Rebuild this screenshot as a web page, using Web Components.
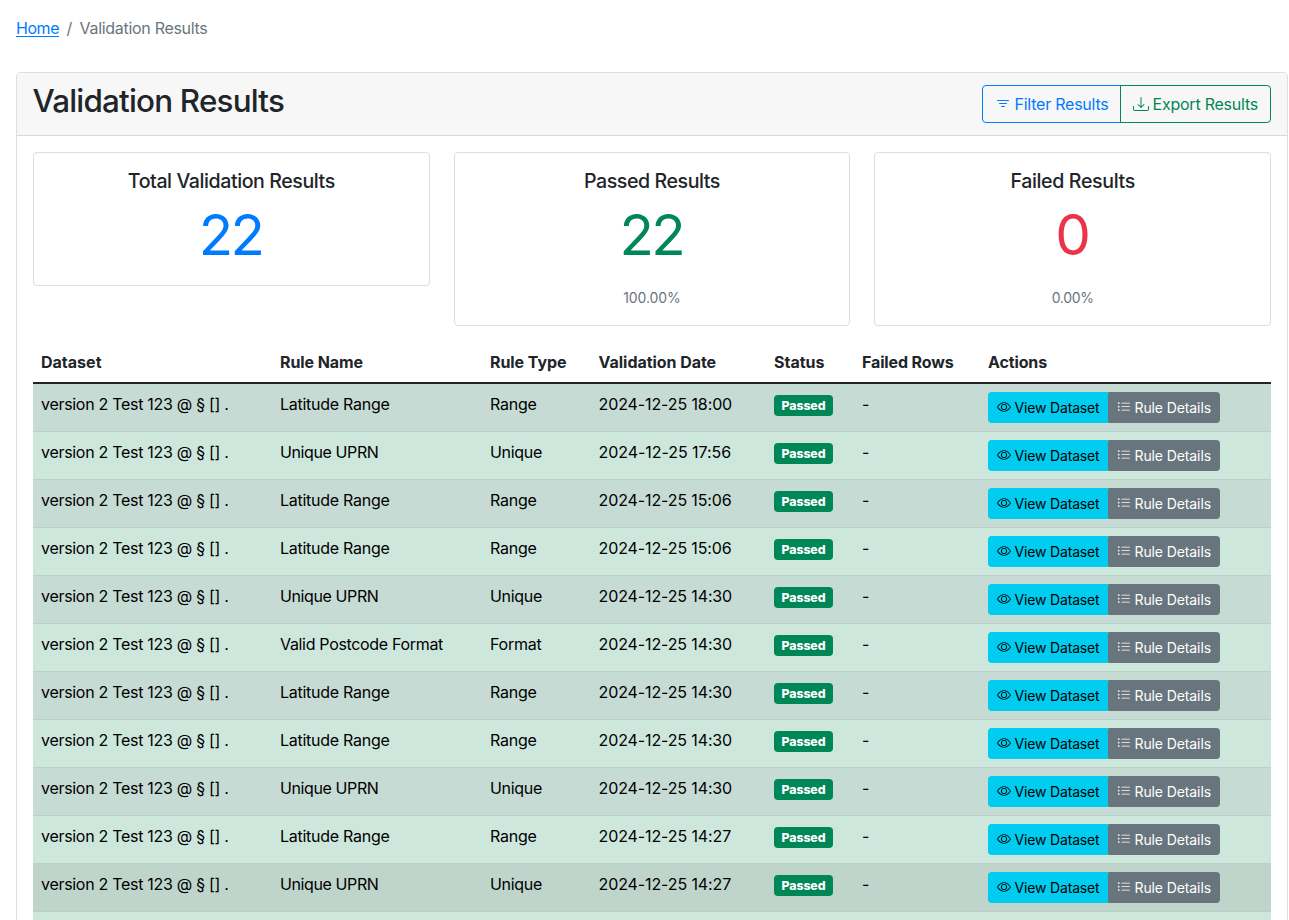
<!DOCTYPE html>
<html lang="en">
<head>
<meta charset="utf-8">
<title>Validation Results</title>
<style>
  html, body { margin: 0; background: #fff; overflow: hidden; }
  body { font-family: Inter, "Liberation Sans", sans-serif; font-size: 16px; line-height: 24px; color: #212529; }
</style>
</head>
<body>
<validation-page></validation-page>
<script>
const ICONS = {
  filter: '<path d="M6 10.5a.5.5 0 0 1 .5-.5h3a.5.5 0 0 1 0 1h-3a.5.5 0 0 1-.5-.5zm-2-3a.5.5 0 0 1 .5-.5h7a.5.5 0 0 1 0 1h-7a.5.5 0 0 1-.5-.5zm-2-3a.5.5 0 0 1 .5-.5h11a.5.5 0 0 1 0 1h-11a.5.5 0 0 1-.5-.5z"/>',
  download: '<path d="M.5 9.9a.5.5 0 0 1 .5.5v2.5a1 1 0 0 0 1 1h12a1 1 0 0 0 1-1v-2.5a.5.5 0 0 1 1 0v2.5a2 2 0 0 1-2 2H2a2 2 0 0 1-2-2v-2.5a.5.5 0 0 1 .5-.5z"/><path d="M7.646 11.854a.5.5 0 0 0 .708 0l3-3a.5.5 0 0 0-.708-.708L8.5 10.293V1.5a.5.5 0 0 0-1 0v8.793L5.354 8.146a.5.5 0 1 0-.708.708l3 3z"/>',
  eye: '<path d="M16 8s-3-5.5-8-5.5S0 8 0 8s3 5.5 8 5.5S16 8 16 8zM1.173 8a13.133 13.133 0 0 1 1.66-2.043C4.12 4.668 5.88 3.5 8 3.5c2.12 0 3.879 1.168 5.168 2.457A13.133 13.133 0 0 1 14.828 8c-.058.087-.122.183-.195.288-.335.48-.83 1.12-1.465 1.755C11.879 11.332 10.119 12.5 8 12.5c-2.12 0-3.879-1.168-5.168-2.457A13.134 13.134 0 0 1 1.172 8z"/><path d="M8 5.5a2.5 2.5 0 1 0 0 5 2.5 2.5 0 0 0 0-5zM4.5 8a3.5 3.5 0 1 1 7 0 3.5 3.5 0 0 1-7 0z"/>',
  list: '<path fill-rule="evenodd" d="M5 11.5a.5.5 0 0 1 .5-.5h9a.5.5 0 0 1 0 1h-9a.5.5 0 0 1-.5-.5zm0-4a.5.5 0 0 1 .5-.5h9a.5.5 0 0 1 0 1h-9a.5.5 0 0 1-.5-.5zm0-4a.5.5 0 0 1 .5-.5h9a.5.5 0 0 1 0 1h-9a.5.5 0 0 1-.5-.5zm-3 1a1 1 0 1 0 0-2 1 1 0 0 0 0 2zm0 4a1 1 0 1 0 0-2 1 1 0 0 0 0 2zm0 4a1 1 0 1 0 0-2 1 1 0 0 0 0 2z"/>'
};

class Base extends HTMLElement {
  connectedCallback() {
    if (this.shadowRoot) return;
    this.attachShadow({ mode: 'open' }).innerHTML = this.view();
    this.ready();
  }
  ready() {}
}

/* A single line of text tracked so that it sets to the measure given in "w". */
customElements.define('ui-text', class extends Base {
  view() { return '<style>:host{display:inline-block;white-space:nowrap}</style><slot></slot>'; }
  ready() {
    const w = parseFloat(this.getAttribute('w'));
    if (!w) return;
    const n = this.textContent.length;
    const natural = this.getBoundingClientRect().width;
    this.style.letterSpacing = ((w - natural) / n).toFixed(4) + 'px';
  }
});

customElements.define('ui-icon', class extends Base {
  view() {
    return `<style>:host{display:block;width:var(--icon,16px);height:var(--icon,16px);flex:none}svg{display:block;width:100%;height:100%}</style>
      <svg viewBox="0 0 16 16" fill="currentColor">${ICONS[this.getAttribute('name')]}</svg>`;
  }
});

customElements.define('ui-button', class extends Base {
  view() {
    return `<style>
      :host{display:flex;box-sizing:border-box;height:38px;padding:0 12px;border:1px solid currentColor;align-items:center;white-space:nowrap;cursor:pointer}
      :host([variant=primary]){color:#007bff;border-radius:4px 0 0 4px;width:139px}
      :host([variant=success]){color:#008758;border-radius:0 4px 4px 0;margin-left:-1px;width:151px}
      :host([size=sm]){height:31px;padding:0 8px;font-size:14px;line-height:21px;--icon:14px}
      :host([variant=info]){background:#00ccf0;border-color:#00ccf0;color:#000;border-radius:3.2px 0 0 3.2px;width:120px}
      :host([variant=secondary]){background:#69757d;border-color:#69757d;width:112px;border-radius:0 3.2px 3.2px 0}
      .in{display:contents}
      :host([variant=secondary]) ui-icon,:host([variant=secondary]) slot{color:#fff}
      ui-icon{margin:0 3.5px 0 0}
      :host([size=sm]) ui-icon{margin-top:-1px}
    </style><ui-icon name="${this.getAttribute('icon')}"></ui-icon><span class="in"><slot></slot></span>`;
  }
});

customElements.define('bread-crumb', class extends Base {
  view() {
    return `<style>:host{display:flex;height:24px;color:#6a757d}a,a ui-text{color:#007bff;text-decoration:underline;text-underline-offset:1.5px;text-decoration-thickness:1px}.sep{width:5px;padding:0 8px 0 7.5px}</style>
      <a><ui-text w="43">Home</ui-text></a><span class="sep">/</span><ui-text w="128">Validation Results</ui-text>`;
  }
});

customElements.define('stat-card', class extends Base {
  view() {
    return `<style>
      :host{display:block;box-sizing:border-box;border:1px solid #dedede;border-radius:4px;padding:16px;text-align:center;background:#fff}
      .t{font-size:19.6px;font-weight:500;line-height:24px;margin-bottom:8px}
      .n{font-size:56.5px;font-weight:380;line-height:68px;padding-right:1.5px}
      .p{margin-top:16px;height:24px;line-height:26px;font-size:14px;color:#6a757d}
    </style>
    <div class="t"><slot></slot></div>
    <div class="n" style="color:${this.getAttribute('color')}"><ui-text w="${this.getAttribute('nw')}">${this.getAttribute('value')}</ui-text></div>
    ${this.hasAttribute('percent') ? `<div class="p"><ui-text w="${this.getAttribute('pw')}">${this.getAttribute('percent')}</ui-text></div>` : ''}`;
  }
});

customElements.define('status-badge', class extends Base {
  view() {
    return `<style>:host{display:flex;box-sizing:border-box;width:59px;height:21px;margin-top:3px;border-radius:4px;background:#008758;color:#fff;font-size:12.3px;font-weight:800;line-height:21px;align-items:center;justify-content:center}</style><ui-text w="44">Passed</ui-text>`;
  }
});

const COLS = 'grid-template-columns:239px 210px 108.6px 175.4px 88px 126px 1fr';

customElements.define('result-row', class extends Base {
  view() {
    const cell = k => { const [t, w] = this.getAttribute(k).split('|'); return `<div><ui-text w="${w}">${t}</ui-text></div>`; };
    return `<style>
      :host{display:grid;${COLS};box-sizing:border-box;height:48px;padding-top:8px;border-bottom:1px solid #bad0c7;background:#cee7dd;color:#000}
      :host([striped]){background:#c6dbd3}
      :host([active]){background:#bfd5cc}
      div{padding-left:8px}
      .a{display:flex}
    </style>
    <div><ui-text w="187.5">version 2 Test 123 @ § [] .</ui-text></div>
    ${cell('rule')}${cell('type')}${cell('date')}
    <div><status-badge></status-badge></div><div>-</div>
    <div class="a"><ui-button size="sm" variant="info" icon="eye"><ui-text w="85">View Dataset</ui-text></ui-button><ui-button size="sm" variant="secondary" icon="list"><ui-text w="76.5">Rule Details</ui-text></ui-button></div>`;
  }
});

const LAT = 'Latitude Range|109.5', UPRN = 'Unique UPRN|98.5', POST = 'Valid Postcode Format|163';
const RANGE = 'Range|46.5', UNIQUE = 'Unique|52', FORMAT = 'Format|51.5';
const ROWS = [
  [LAT, RANGE, '2024-12-25 18:00|133.5'],
  [UPRN, UNIQUE, '2024-12-25 17:56|132.5'],
  [LAT, RANGE, '2024-12-25 15:06|133'],
  [LAT, RANGE, '2024-12-25 15:06|133'],
  [UPRN, UNIQUE, '2024-12-25 14:30|133.5'],
  [POST, FORMAT, '2024-12-25 14:30|133.5'],
  [LAT, RANGE, '2024-12-25 14:30|133.5'],
  [LAT, RANGE, '2024-12-25 14:30|133.5'],
  [UPRN, UNIQUE, '2024-12-25 14:30|133.5'],
  [LAT, RANGE, '2024-12-25 14:27|132.5'],
  [UPRN, UNIQUE, '2024-12-25 14:27|132.5']
];

customElements.define('results-table', class extends Base {
  view() {
    const heads = [['Dataset', 60.5], ['Rule Name', 83], ['Rule Type', 76.5], ['Validation Date', 117.5], ['Status', 50.5], ['Failed Rows', 91.5], ['Actions', 59]];
    return `<style>
      :host{display:block}
      .h{display:grid;${COLS};box-sizing:border-box;height:42px;padding-top:8px;border-bottom:2px solid #212529;font-weight:660}
      .h div{padding-left:8px}
      .next{height:48px;background:#cee7dd}
    </style>
    <div class="h">${heads.map(([t, w]) => `<div><ui-text w="${w}">${t}</ui-text></div>`).join('')}</div>
    ${ROWS.map(([r, t, d], i) => `<result-row rule="${r}" type="${t}" date="${d}" ${i % 2 ? '' : 'striped'} ${i === 10 ? 'active' : ''}></result-row>`).join('')}
    <div class="next"></div>`;
  }
});

customElements.define('panel-card', class extends Base {
  view() {
    return `<style>
      :host{display:block;box-sizing:border-box;border:1px solid #dedede;border-radius:4px;background:#fff;height:1100px}
      header{display:flex;justify-content:space-between;box-sizing:border-box;height:63px;padding:8px 16px;background:#f7f7f7;border-bottom:1px solid #d9d9d9;border-radius:3px 3px 0 0}
      ::slotted([slot=title]){margin:0 0 0 -0.5px;font-size:31.4px;font-weight:540;line-height:40px}
      .act{display:flex;padding-top:4px}
      .body{padding:16px}
    </style>
    <header><slot name="title"></slot><div class="act"><slot name="actions"></slot></div></header>
    <div class="body"><slot></slot></div>`;
  }
});

customElements.define('validation-page', class extends Base {
  view() {
    return `<style>
      :host{display:block;box-sizing:border-box;width:1304px;height:920px;overflow:hidden;padding:16px 16px 0}
      panel-card{margin-top:32px}
      .stats{display:grid;grid-template-columns:repeat(3,1fr);gap:24px;align-items:start;height:174px;margin-bottom:16px}
    </style>
    <bread-crumb></bread-crumb>
    <panel-card>
      <h2 slot="title"><ui-text w="251.5">Validation Results</ui-text></h2>
      <ui-button slot="actions" variant="primary" icon="filter"><ui-text w="94">Filter Results</ui-text></ui-button>
      <ui-button slot="actions" variant="success" icon="download"><ui-text w="105.5">Export Results</ui-text></ui-button>
      <div class="stats">
        <stat-card color="#007bff" value="22" nw="63.5"><ui-text w="207">Total Validation Results</ui-text></stat-card>
        <stat-card color="#008758" value="22" nw="63.5" percent="100.00%" pw="57.5"><ui-text w="136">Passed Results</ui-text></stat-card>
        <stat-card color="#eb3349" value="0" nw="33.5" percent="0.00%" pw="42"><ui-text w="124.5">Failed Results</ui-text></stat-card>
      </div>
      <results-table></results-table>
    </panel-card>`;
  }
});
</script>
</body>
</html>
